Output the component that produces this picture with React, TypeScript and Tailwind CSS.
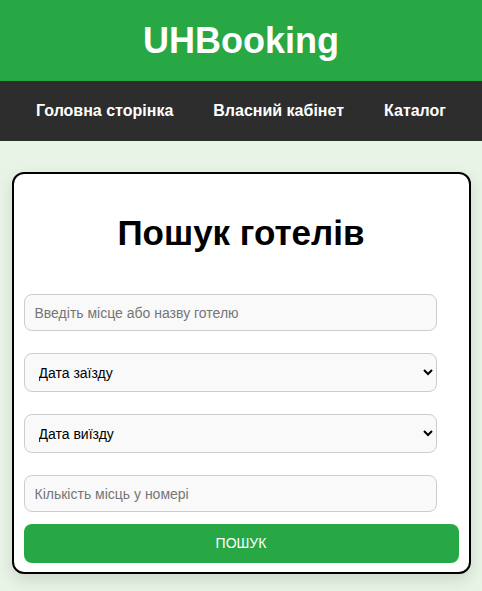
export default function App() {
  return (
    <div className="min-h-[591px] bg-[#e8f4e6] font-['Liberation_Sans',Arial,sans-serif] pb-4">
      {/* Header */}
      <header className="bg-[#28a745] py-5 text-center">
        <h1 className="text-[36px] leading-[41px] font-bold text-white">UHBooking</h1>
      </header>

      {/* Nav */}
      <nav className="bg-[#2d2d2d] h-[60px] flex items-center justify-center gap-10">
        <a className="text-white font-bold text-base">Головна сторінка</a>
        <a className="text-white font-bold text-base">Власний кабінет</a>
        <a className="text-white font-bold text-base">Каталог</a>
      </nav>

      {/* Search card */}
      <div className="mt-[31px] mx-auto w-[459px] bg-white border-2 border-black rounded-xl px-[10px] pt-[10px] pb-[9px] shadow-[0_6px_16px_rgba(0,0,0,0.12)]">
        <h2 className="text-center text-[35px] leading-[38px] font-bold text-black mt-[30px] mb-[42px]">
          Пошук готелів
        </h2>

        <input
          type="text"
          placeholder="Введіть місце або назву готелю"
          className="block w-[95%] h-[37px] px-[10px] text-[14px] bg-[#f9f9f9] border border-[#ccc] rounded-lg placeholder:text-[#757575] outline-none"
        />

        <select className="block w-[95%] h-[39px] mt-[22px] px-[10px] text-[14px] text-black bg-[#f9f9f9] border border-[#ccc] rounded-lg outline-none">
          <option>Дата заїзду</option>
        </select>

        <select className="block w-[95%] h-[39px] mt-[22px] px-[10px] text-[14px] text-black bg-[#f9f9f9] border border-[#ccc] rounded-lg outline-none">
          <option>Дата виїзду</option>
        </select>

        <input
          type="text"
          placeholder="Кількість місць у номері"
          className="block w-[95%] h-[37px] mt-[22px] px-[10px] text-[14px] bg-[#f9f9f9] border border-[#ccc] rounded-lg placeholder:text-[#757575] outline-none"
        />

        <button className="block w-full h-[39px] mt-[12px] bg-[#28a745] text-white text-[14px] uppercase rounded-lg">
          Пошук
        </button>
      </div>
    </div>
  );
}
